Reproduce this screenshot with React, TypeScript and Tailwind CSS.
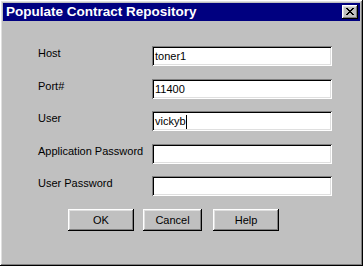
import React from 'react';

const FIELDS = [
  { label: 'Host', value: 'toner1', gap: 'mt-[25px]' },
  { label: 'Port#', value: '11400', gap: 'mt-[13px]' },
  { label: 'User', value: 'vickyb', gap: 'mt-[12px]', caret: true },
  { label: 'Application Password', value: '', gap: 'mt-[13px]' },
  { label: 'User Password', value: '', gap: 'mt-[12px]' },
];

const raised =
  'shadow-[inset_-1px_-1px_#000,inset_1px_1px_#fff,inset_-2px_-2px_#808080,inset_2px_2px_#dfdfdf]';
const sunken =
  'shadow-[inset_1px_1px_#808080,inset_-1px_-1px_#fff,inset_2px_2px_#000,inset_-2px_-2px_#dfdfdf]';

const Button: React.FC<{ label: string; className: string }> = ({ label, className }) => (
  <div className={`h-[22px] shrink-0 flex items-center justify-center bg-[#c0c0c0] ${raised} ${className}`}>
    {label}
  </div>
);

export default function App() {
  return (
    <div
      className={`w-[363px] h-[266px] bg-[#c0c0c0] p-[3px] flex flex-col text-[11px] leading-[13px] text-black ${raised}`}
      style={{ fontFamily: '"Liberation Sans", Arial, sans-serif' }}
    >
      {/* Title bar */}
      <div className="h-[18px] bg-[#000080] flex items-center justify-between pl-[3px] pr-[2px]">
        <span className="text-white font-bold text-[13.5px] leading-[16px]">
          Populate Contract Repository
        </span>
        <div className={`w-[16px] h-[14px] bg-[#c0c0c0] flex items-center justify-center ${raised}`}>
          <svg width="8" height="7" viewBox="0 0 8 7" className="mt-[-1px]">
            <path
              d="M0 0h2v1h1v1h2V1h1V0h2v1H7v1H6v1H5v1h1v1h1v1h1v1H6V6H5V5H3v1H2v1H0V6h1V5h1V4h1V3H2V2H1V1H0z"
              fill="#000"
            />
          </svg>
        </div>
      </div>

      {/* Fields */}
      <div className="flex flex-col">
        {FIELDS.map((f) => (
          <div key={f.label} className={`flex h-[20px] ${f.gap}`}>
            <div className="w-[149px] shrink-0 pl-[35px] pt-[1px] whitespace-nowrap">{f.label}</div>
            <div className={`w-[180px] h-[20px] shrink-0 bg-white flex items-center pl-[3px] pt-[1px] ${sunken}`}>
              <span>{f.value}</span>
              {f.caret && <span className="w-[1px] h-[14px] bg-black" />}
            </div>
          </div>
        ))}
      </div>

      {/* Buttons */}
      <div className="flex mt-[13px] pl-[65px]">
        <Button label="OK" className="w-[66px]" />
        <Button label="Cancel" className="w-[59px] ml-[9px]" />
        <Button label="Help" className="w-[66px] ml-[11px]" />
      </div>
    </div>
  );
}
